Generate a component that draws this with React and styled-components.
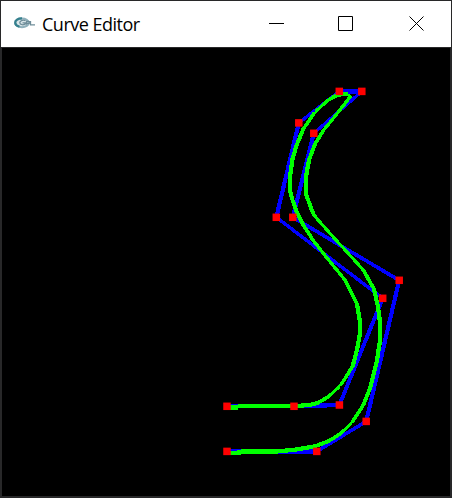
import React from "react";
import styled, { createGlobalStyle } from "styled-components";

const GlobalStyle = createGlobalStyle`
  * { box-sizing: border-box; }
  html, body { margin: 0; background: #262626; overflow: hidden; }
`;

const Window = styled.div`
  width: 452px;
  height: 498px;
  display: flex;
  flex-direction: column;
  padding: 1px 1px 2px;
  background: #282829;
`;

const TitleBar = styled.header`
  height: 46px;
  flex: none;
  display: flex;
  align-items: center;
  background: #fff;
  padding-left: 12px;
`;

const AppIcon = styled.svg`
  width: 24px;
  height: 16px;
  flex: none;
  margin-top: -3px;
`;

const Title = styled.h1`
  margin: 0 auto 0 5px;
  font: 400 18px/24px "Open Sans", "Noto Sans", sans-serif;
  letter-spacing: -0.5px;
  color: #000;
  white-space: nowrap;
`;

const Controls = styled.div`
  display: flex;
  height: 100%;
`;

const ControlButton = styled.button`
  width: ${(p) => p.$width || 70}px;
  height: 100%;
  padding: 0;
  border: 0;
  background: transparent;
  display: flex;
  align-items: center;
  justify-content: center;
`;

const Glyph = styled.svg`
  width: 16px;
  height: 16px;
  fill: none;
  stroke: #000;
`;

const Canvas = styled.main`
  flex: 1;
  min-height: 0;
  margin: 1px 1px 0;
  background: #000;
`;

const Drawing = styled.svg`
  display: block;
  width: 448px;
  height: 448px;
`;

const Line = styled.path`
  fill: ${(p) => p.$color};
  shape-rendering: crispEdges;
`;

const handles = [
  [227, 406.3], [294, 406.3], [339.4, 405], [382.7, 298.3], [276.3, 217.3],
  [298.8, 122.9], [339.3, 91.4], [361.8, 91.4], [313.8, 133.3], [292.8, 217.3],
  [399.2, 280.3], [366.2, 421.4], [316.8, 451.4], [227, 451.4],
];

const curve = [
  [229, 407.5], [238, 407.5], [238, 406], [295, 406], [303, 405.5], [312, 404.5],
  [318, 402.7], [328, 397], [340, 386], [346, 377], [352.7, 366], [357, 350],
  [360, 333], [360, 321.5], [357, 304], [353, 296], [345, 280], [327, 258],
  [313.3, 240.5], [303.3, 225], [296.7, 211.7], [292.5, 200], [290, 191],
  [290, 176.7], [292.5, 159], [296.7, 145], [303.3, 129], [315, 112],
  [328.3, 100], [336.7, 95.3], [343, 93.8], [348, 94], [350, 97],
  [345, 103.5], [333.3, 118.3], [323.3, 130.5], [315, 144], [309, 160],
  [306.3, 175], [306.3, 195], [313.3, 214], [319, 221], [335, 239],
  [347, 252], [363.3, 270], [374, 289], [378, 307], [379.7, 320],
  [379.7, 343], [376.7, 361.7], [370.5, 387], [363.3, 405], [351.7, 423],
  [340, 434], [328.3, 441.3], [315, 446.3], [295, 449.7], [278, 451.4],
  [241, 451.4], [241, 452.6], [229, 452.8],
];

// Each segment is widened along its minor axis only, like a rasterised GL line.
const HALF = 2.15;
const toRibbon = (list) =>
  list
    .slice(1)
    .map(([x2, y2], i) => {
      const [x1, y1] = list[i];
      const steep = Math.abs(y2 - y1) > Math.abs(x2 - x1);
      const dx = steep ? HALF : 0;
      const dy = steep ? 0 : HALF;
      return (steep ? y2 > y1 : x2 < x1)
        ? `M${x1 - dx} ${y1 - dy}L${x2 - dx} ${y2 - dy}L${x2 + dx} ${y2 + dy}L${x1 + dx} ${y1 + dy}Z`
        : `M${x1 + dx} ${y1 + dy}L${x2 + dx} ${y2 + dy}L${x2 - dx} ${y2 - dy}L${x1 - dx} ${y1 - dy}Z`;
    });

const Ribbon = ({ points, color }) =>
  toRibbon(points).map((d) => <Line key={d} d={d} $color={color} />);

export default function App() {
  return (
    <>
      <GlobalStyle />
      <Window>
        <TitleBar>
          <AppIcon viewBox="0 0 24 16" aria-hidden="true">
            <ellipse cx="9" cy="7.9" rx="6.8" ry="4.3" fill="#dbe7ea" stroke="#8fb0bb" strokeWidth="2" />
            <path d="M9 3.4C4.8 3.3 2 5.2 2.2 7.8c.2 2 2 3.3 4.3 3.9" fill="none" stroke="#35808e" strokeWidth="2.2" />
            <path d="M12.5 5.6c-3-1-5.8.2-5.7 2.2.1 2.2 4 2.6 5.9 1V7.8H9.5M13.6 9.8V6.3h2c2 0 2 2 0 2h-2M17.5 6v3.8H22" fill="none" stroke="#6f8d99" strokeWidth="1.3" />
          </AppIcon>
          <Title>Curve Editor</Title>
          <Controls>
            <ControlButton $width={68} aria-label="Minimize">
              <Glyph viewBox="0 0 16 16"><path d="M0 7.5h15" /></Glyph>
            </ControlButton>
            <ControlButton aria-label="Maximize">
              <Glyph viewBox="0 0 16 16"><path d="M.5.5h14v14H.5z" /></Glyph>
            </ControlButton>
            <ControlButton $width={70} aria-label="Close">
              <Glyph viewBox="-1 0 16 16"><path d="M.5.5l14 14M14.5.5l-14 14" /></Glyph>
            </ControlButton>
          </Controls>
        </TitleBar>
        <Canvas>
          <Drawing viewBox="2 48 448 448">
            <Ribbon points={handles} color="#00f" />
            <Ribbon points={curve} color="#0f0" />
            {handles.map(([x, y]) => (
              <rect key={`${x}-${y}`} x={x - 3.75} y={y - 3.75} width="7.5" height="7.5" fill="#f00" />
            ))}
          </Drawing>
        </Canvas>
      </Window>
    </>
  );
}
